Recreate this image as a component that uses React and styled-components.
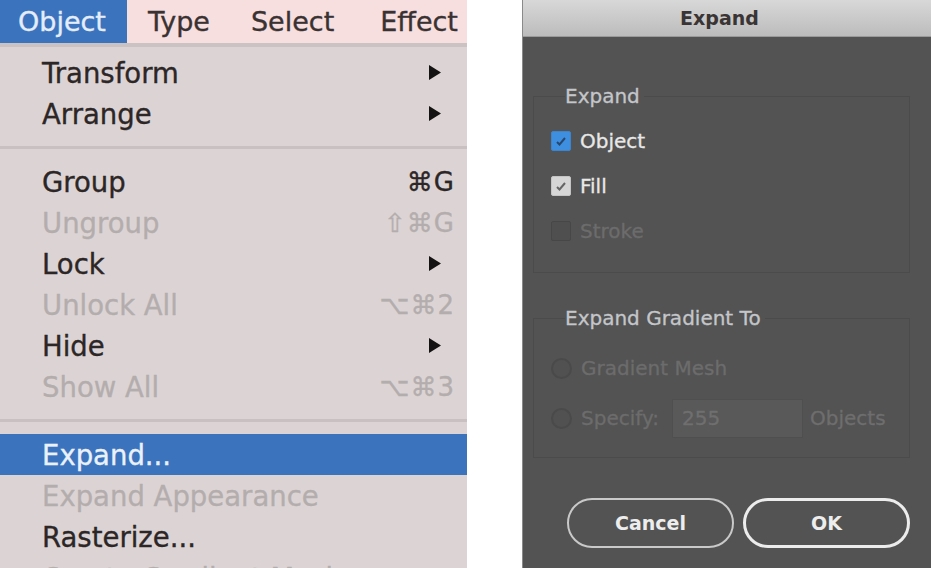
import React from "react";
import styled, { createGlobalStyle } from "styled-components";

const GlobalStyle = createGlobalStyle`
  html, body {
    margin: 0;
    padding: 0;
    background: #ffffff;
  }
  body {
    font-family: "DejaVu Sans", "Liberation Sans", sans-serif;
  }
`;

const Page = styled.div`
  display: flex;
  width: 931px;
  height: 568px;
  overflow: hidden;
  gap: 55px;
`;

/* ---------- left: Object menu ---------- */

const MenuPanel = styled.div`
  width: 467px;
  flex-shrink: 0;
  display: flex;
  flex-direction: column;
  background: #dcd4d4;
  font-size: 27.5px;
  -webkit-text-stroke: 0.35px currentColor;
`;

const MenuBar = styled.div`
  display: flex;
  height: 43px;
  background: #f7dfdf;
  border-bottom: 4px solid #cbc3c3;
  flex-shrink: 0;
  font-size: 27px;
`;

const BarItem = styled.div`
  display: flex;
  align-items: center;
  padding: 0 ${(p) => (p.$active ? "21px" : "0")} 0 ${(p) => p.$pl}px;
  background: ${(p) => (p.$active ? "#3b73bd" : "transparent")};
  color: ${(p) => (p.$active ? "#e4edf9" : "#3a3232")};
  white-space: nowrap;
`;

const MenuList = styled.div`
  display: flex;
  flex-direction: column;
  padding-top: 5px;
`;

const Row = styled.div`
  display: flex;
  align-items: center;
  justify-content: space-between;
  height: 41px;
  flex-shrink: 0;
  padding: 0 12px 0 42px;
  background: ${(p) => (p.$selected ? "#3b73bd" : "transparent")};
  color: ${(p) =>
    p.$selected ? "#eaf1fb" : p.$disabled ? "#b4adad" : "#2c2626"};
  white-space: nowrap;
`;

const Shortcut = styled.span`
  font-size: 26px;
  letter-spacing: 1px;
`;

const Separator = styled.div`
  height: 27px;
  flex-shrink: 0;
  display: flex;
  align-items: center;
  &::after {
    content: "";
    display: block;
    width: 100%;
    height: 3px;
    background: #c9c1c1;
  }
`;

const Arrow = () => (
  <svg width="12" height="15" viewBox="0 0 12 15" style={{ marginRight: 14 }}>
    <polygon points="0,0 12,7.5 0,15" fill="#141212" />
  </svg>
);

/* ---------- right: Expand dialog ---------- */

const Dialog = styled.div`
  width: 409px;
  flex-shrink: 0;
  display: flex;
  flex-direction: column;
  background: #535353;
  border-left: 1px solid #8a8a8a;
`;

const TitleBar = styled.div`
  height: 36px;
  flex-shrink: 0;
  display: flex;
  align-items: center;
  justify-content: center;
  padding-right: 16px;
  background: linear-gradient(#d8d8d8, #bcbcbc);
  border-bottom: 1px solid #9a9a9a;
  color: #3a3434;
  font-size: 19px;
  font-weight: bold;
`;

const Body = styled.div`
  display: flex;
  flex-direction: column;
  padding: 47px 22px 0 10px;
`;

const Group = styled.fieldset`
  margin: ${(p) => (p.$spaced ? "33px" : "0")} 0 0 0;
  padding: ${(p) => p.$pad};
  border: 1px solid #4b4b4b;
  display: flex;
  flex-direction: column;
`;

const Legend = styled.legend`
  padding: 0 4px 0 0;
  margin-left: 14px;
  color: #c4c6ca;
  font-size: 20px;
  line-height: 24px;
  -webkit-text-stroke: 0.3px currentColor;
`;

const OptionRow = styled.label`
  display: flex;
  align-items: center;
  gap: 9px;
  height: ${(p) => p.$h || 45}px;
  font-size: 20px;
  color: ${(p) => (p.$disabled ? "#6c6c6c" : "#e8e8e8")};
  -webkit-text-stroke: 0.3px currentColor;
`;

const Box = styled.span`
  width: 20px;
  height: 20px;
  box-sizing: border-box;
  border-radius: 2px;
  display: flex;
  align-items: center;
  justify-content: center;
  background: ${(p) => p.$bg};
  border: 1px solid ${(p) => p.$border};
`;

const Radio = styled.span`
  width: 21px;
  height: 21px;
  box-sizing: border-box;
  border-radius: 50%;
  border: 2px solid #4a4a4a;
  background: #515151;
`;

const NumberField = styled.span`
  width: 131px;
  height: 39px;
  margin-left: 4px;
  box-sizing: border-box;
  display: flex;
  align-items: center;
  padding-left: 9px;
  background: #595959;
  border: 1px solid #4f4f4f;
  color: #6f6f6f;
`;

const Unit = styled.span`
  margin-left: -2px;
  color: #6e6e6e;
`;

const Buttons = styled.div`
  display: flex;
  justify-content: flex-end;
  gap: 9px;
  margin-top: 40px;
`;

const Button = styled.button`
  width: 167px;
  height: 50px;
  box-sizing: border-box;
  border-radius: 25px;
  background: #535353;
  border: ${(p) => (p.$primary ? "3px solid #ececec" : "2px solid #c9c9c9")};
  color: #ededed;
  font-family: "DejaVu Sans", sans-serif;
  font-weight: bold;
  font-size: 19px;
  padding: 0;
`;

const Check = ({ color }) => (
  <svg width="12" height="12" viewBox="0 0 12 12">
    <path
      d="M2 7 L4.5 9.5 L10 3"
      fill="none"
      stroke={color}
      strokeWidth="2"
    />
  </svg>
);

const Checkbox = ({ state, label }) => {
  const look = {
    on: { bg: "#3e8fe0", border: "#3a85d2", tick: "#28476e" },
    light: { bg: "#d6d6d6", border: "#c4c4c4", tick: "#666" },
    off: { bg: "#4f4f4f", border: "#474747", tick: null },
  }[state];
  return (
    <OptionRow $disabled={state === "off"}>
      <Box $bg={look.bg} $border={look.border}>
        {look.tick && <Check color={look.tick} />}
      </Box>
      {label}
    </OptionRow>
  );
};

const menu = [
  { label: "Transform", sub: true },
  { label: "Arrange", sub: true },
  "sep",
  { label: "Group", key: "⌘G" },
  { label: "Ungroup", key: "⇧⌘G", disabled: true },
  { label: "Lock", sub: true },
  { label: "Unlock All", key: "⌥⌘2", disabled: true },
  { label: "Hide", sub: true },
  { label: "Show All", key: "⌥⌘3", disabled: true },
  "sep",
  { label: "Expand...", selected: true },
  { label: "Expand Appearance", disabled: true },
  { label: "Rasterize..." },
  { label: "Create Gradient Mesh...", disabled: true },
];

export default function App() {
  return (
    <>
      <GlobalStyle />
      <Page>
        <MenuPanel>
          <MenuBar>
            <BarItem $active $pl={18}>Object</BarItem>
            <BarItem $pl={21}>Type</BarItem>
            <BarItem $pl={41}>Select</BarItem>
            <BarItem $pl={46}>Effect</BarItem>
          </MenuBar>
          <MenuList>
            {menu.map((item, i) =>
              item === "sep" ? (
                <Separator key={i} />
              ) : (
                <Row key={i} $disabled={item.disabled} $selected={item.selected}>
                  <span>{item.label}</span>
                  {item.sub && <Arrow />}
                  {item.key && <Shortcut>{item.key}</Shortcut>}
                </Row>
              )
            )}
          </MenuList>
        </MenuPanel>

        <Dialog>
          <TitleBar>Expand</TitleBar>
          <Body>
            <Group $pad="10px 14px 19px 17px">
              <Legend>Expand</Legend>
              <Checkbox state="on" label="Object" />
              <Checkbox state="light" label="Fill" />
              <Checkbox state="off" label="Stroke" />
            </Group>

            <Group $spaced $pad="13px 14px 14px 17px">
              <Legend>Expand Gradient To</Legend>
              <OptionRow $disabled $h={50}>
                <Radio />
                Gradient Mesh
              </OptionRow>
              <OptionRow $disabled $h={50}>
                <Radio />
                Specify:
                <NumberField>255</NumberField>
                <Unit>Objects</Unit>
              </OptionRow>
            </Group>

            <Buttons>
              <Button>Cancel</Button>
              <Button $primary>OK</Button>
            </Buttons>
          </Body>
        </Dialog>
      </Page>
    </>
  );
}
